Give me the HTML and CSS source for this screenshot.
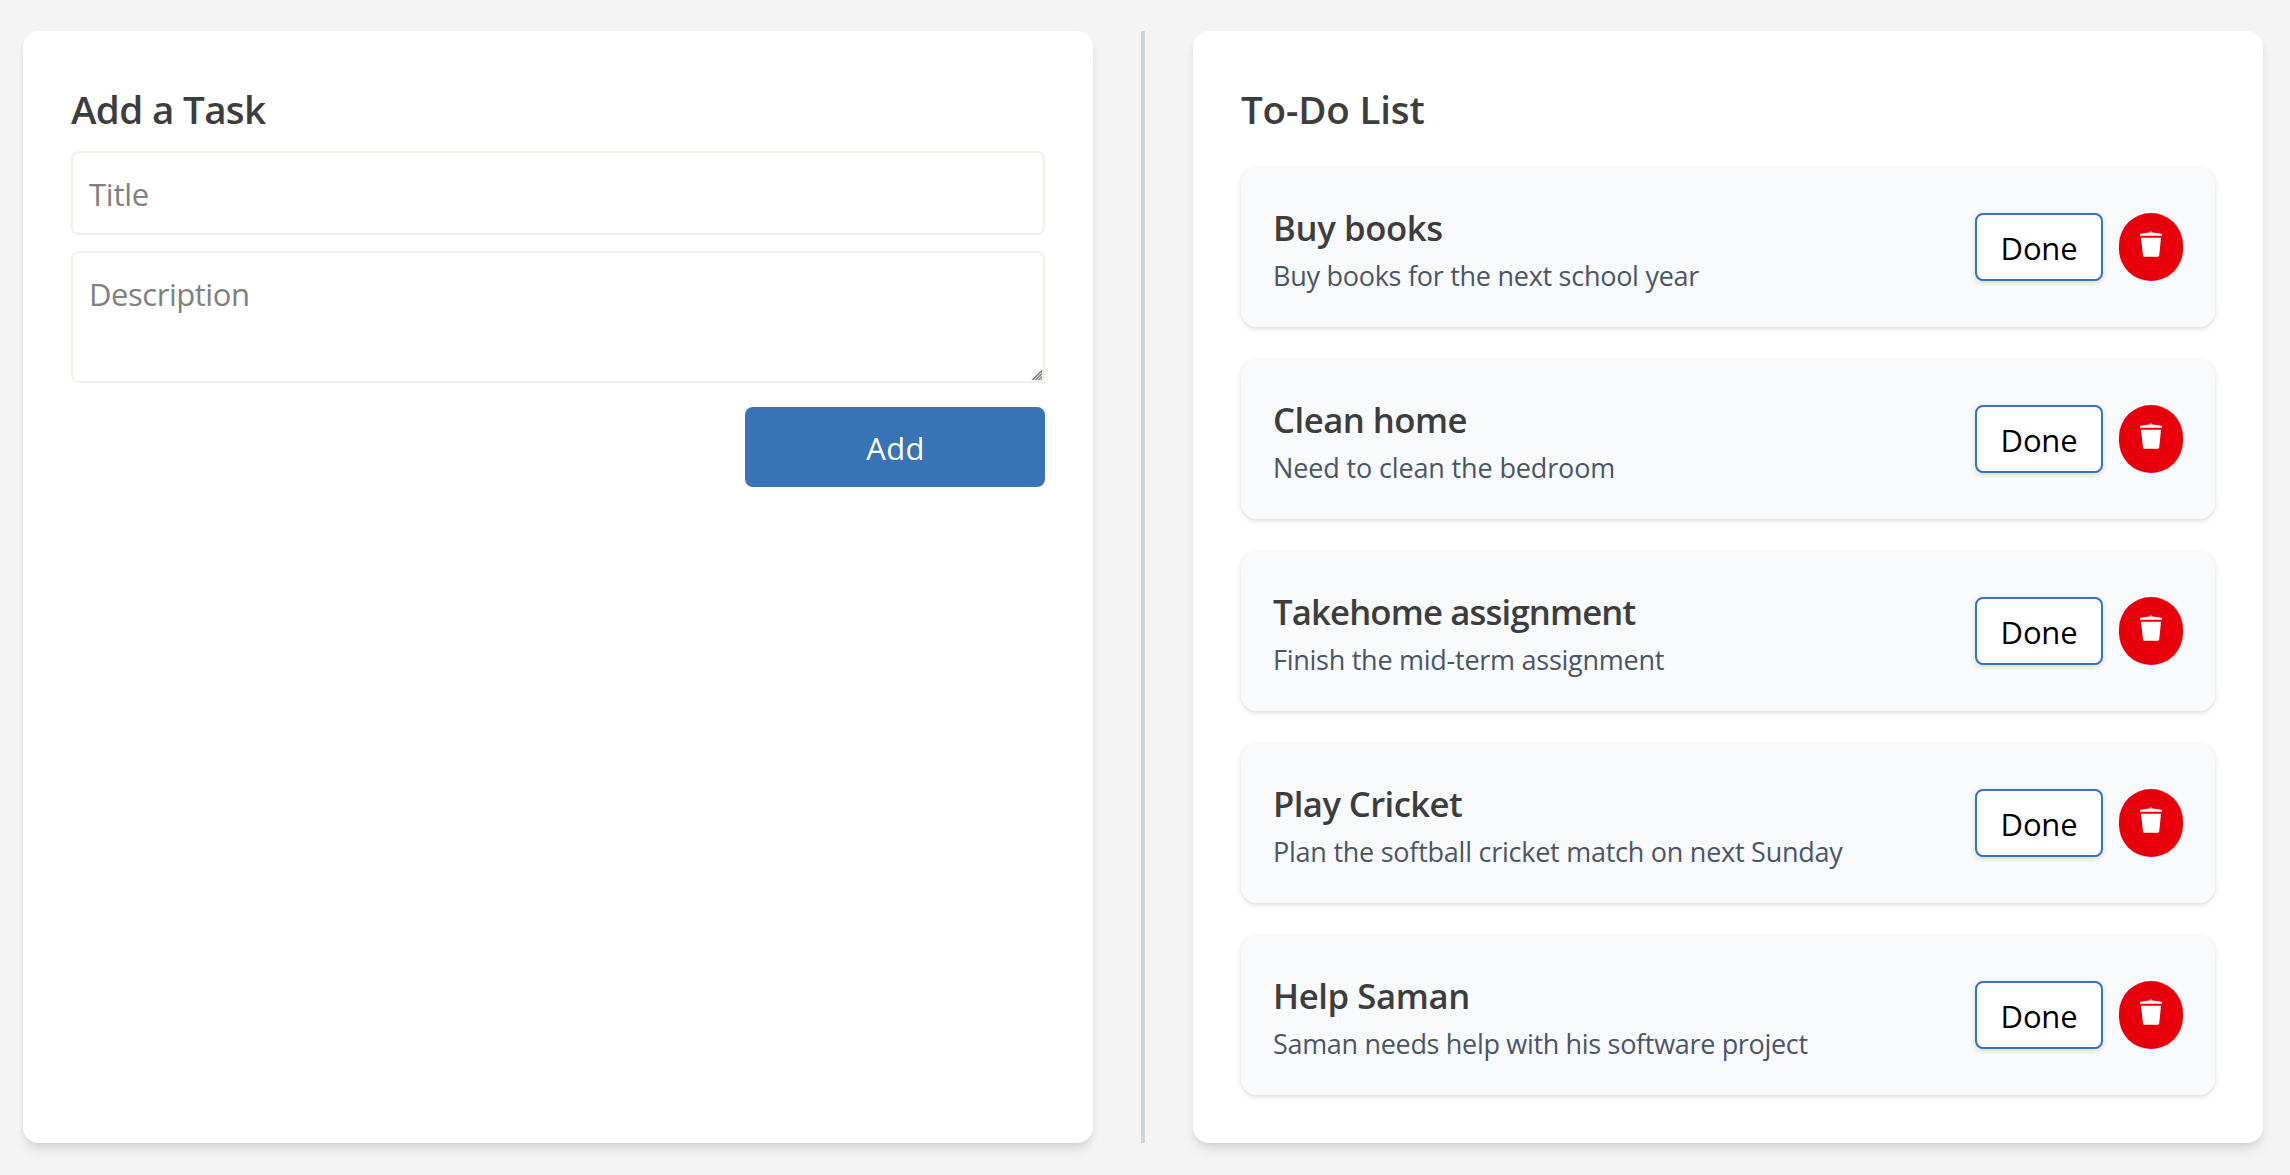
FILE: index.html
```html
<!DOCTYPE html>
<html lang="en">
<head>
<meta charset="utf-8">
<title>To-Do List</title>
<link rel="stylesheet" href="styles.css">
</head>
<body>
<svg class="sprite" aria-hidden="true">
  <symbol id="trash" viewBox="0 0 24 27">
    <path d="M1 4.8V3.6Q1 2.8 2 2.7L5 2.2Q8 1.6 11 1.6V.8Q11 .3 12 .3Q13 .3 13 .8V1.6Q16 1.6 19 2.2L22 2.7Q23 2.8 23 3.6V4.8Z"/>
    <path d="M2 6.8H22L20.2 24.4Q20 25.8 18.8 25.8H5.4Q4.2 25.8 4 24.4Z"/>
  </symbol>
</svg>
<main class="board">
  <section class="panel">
    <h2 class="heading heading-form">Add a Task</h2>
    <form class="form">
      <input class="field field-title" type="text" placeholder="Title">
      <textarea class="field field-desc" rows="2" placeholder="Description"></textarea>
      <button class="add" type="button">Add</button>
    </form>
  </section>
  <div class="divider"></div>
  <section class="panel">
    <h2 class="heading heading-list">To-Do List</h2>
    <ul class="tasks">
      <li class="task">
        <div class="info"><h3 class="name">Buy books</h3><p class="desc">Buy books for the next school year</p></div>
        <button class="done" type="button">Done</button>
        <button class="delete" type="button" aria-label="Delete"><svg class="icon"><use href="#trash"/></svg></button>
      </li>
      <li class="task">
        <div class="info"><h3 class="name">Clean home</h3><p class="desc">Need to clean the bedroom</p></div>
        <button class="done" type="button">Done</button>
        <button class="delete" type="button" aria-label="Delete"><svg class="icon"><use href="#trash"/></svg></button>
      </li>
      <li class="task">
        <div class="info"><h3 class="name">Takehome assignment</h3><p class="desc">Finish the mid-term assignment</p></div>
        <button class="done" type="button">Done</button>
        <button class="delete" type="button" aria-label="Delete"><svg class="icon"><use href="#trash"/></svg></button>
      </li>
      <li class="task">
        <div class="info"><h3 class="name">Play Cricket</h3><p class="desc">Plan the softball cricket match on next Sunday</p></div>
        <button class="done" type="button">Done</button>
        <button class="delete" type="button" aria-label="Delete"><svg class="icon"><use href="#trash"/></svg></button>
      </li>
      <li class="task">
        <div class="info"><h3 class="name">Help Saman</h3><p class="desc">Saman needs help with his software project</p></div>
        <button class="done" type="button">Done</button>
        <button class="delete" type="button" aria-label="Delete"><svg class="icon"><use href="#trash"/></svg></button>
      </li>
    </ul>
  </section>
</main>
</body>
</html>
```
FILE: styles.css
```css
* { box-sizing: border-box; margin: 0; padding: 0; }

body {
  height: 1175px;
  overflow: hidden;
  background: #f4f4f4;
  color: #3d3d3d;
  font-family: "Segoe UI", "Open Sans", "Noto Sans", sans-serif;
}

button, input, textarea { font: inherit; }

.sprite { display: none; }

.board {
  display: flex;
  gap: 48px;
  height: 1143px;
  padding: 31px 27px 0 23px;
}

.panel {
  flex: 1;
  min-width: 0;
  padding: 48px;
  border-radius: 16px;
  background: #fff;
  box-shadow: 0 8px 12px -2px rgb(0 0 0 / .1), 0 4px 8px -4px rgb(0 0 0 / .1);
}

.divider { width: 4px; background: #d1d5dc; }

.heading {
  height: 56px;
  padding-top: 2px;
  font-size: 38.6px;
  font-weight: 600;
  line-height: 56px;
}
.heading-form { letter-spacing: -.66px; }
.heading-list { letter-spacing: -.19px; }

.form {
  display: flex;
  flex-direction: column;
  gap: 16px;
  padding-top: 16px;
}

.field {
  display: block;
  width: 100%;
  padding: 17px 16px 15px;
  border: 2px solid #f3efe6;
  border-radius: 8px;
  outline: none;
  background: #fff;
  font-size: 31px;
  line-height: 48px;
}
.field::placeholder { color: #808080; opacity: 1; }
.field-title { height: 84px; letter-spacing: -.25px; }
.field-desc { height: 132px; letter-spacing: -.46px; }

/* Hatched triangular resize grip */
.field-desc::-webkit-resizer {
  background:
    linear-gradient(135deg, #fff 50%, transparent 50%) right 1px bottom 1px / 11px 11px no-repeat,
    repeating-linear-gradient(135deg, #8a8a8a 0 1px, #e4e4e4 1px 2.12px) right 1px bottom 1px / 11px 11px no-repeat;
}

.add {
  align-self: flex-end;
  width: 300px;
  height: 80px;
  margin-top: 8px;
  padding: 2px 0 0 1px;
  border: 0;
  border-radius: 8px;
  background: #3873b5;
  color: #fff;
  font-size: 31px;
  letter-spacing: .4px;
}

.tasks {
  display: flex;
  flex-direction: column;
  gap: 32px;
  padding-top: 32px;
  list-style: none;
}

.task {
  display: flex;
  align-items: center;
  gap: 16px;
  height: 160px;
  padding: 32px;
  border-radius: 16px;
  background: #f9fafc;
  box-shadow: 0 2px 6px rgb(0 0 0 / .1), 0 2px 4px -2px rgb(0 0 0 / .1);
}

.info { flex: 1; padding-top: 2px; white-space: nowrap; }

.name {
  font-size: 34.7px;
  font-weight: 600;
  line-height: 56px;
  letter-spacing: -.38px;
}

.desc {
  color: #4a5565;
  font-size: 27px;
  line-height: 40px;
  letter-spacing: -.27px;
}

.task:nth-child(2) .name { letter-spacing: -.5px; }
.task:nth-child(3) .name { letter-spacing: -.85px; }
.task:nth-child(4) .name { letter-spacing: -.58px; }
.task:nth-child(5) .name { letter-spacing: -.4px; }
.task:nth-child(2) .desc { letter-spacing: -.14px; }
.task:nth-child(3) .desc { letter-spacing: -.26px; }
.task:nth-child(4) .desc { letter-spacing: -.25px; }
.task:nth-child(5) .desc { letter-spacing: -.32px; }

.done {
  width: 128px;
  height: 68px;
  padding-top: 2px;
  border: 2px solid #3873b5;
  border-radius: 8px;
  background: #fff;
  color: #000;
  font-size: 31px;
  letter-spacing: -.2px;
  box-shadow: 0 2px 6px rgb(0 0 0 / .1), 0 2px 4px -2px rgb(0 0 0 / .1);
}

.delete {
  display: flex;
  justify-content: center;
  width: 64px;
  height: 68px;
  padding-top: 18px;
  border: 0;
  border-radius: 32px;
  background: #e7000b;
}

.icon { width: 24px; height: 27px; fill: #fff; }
```
